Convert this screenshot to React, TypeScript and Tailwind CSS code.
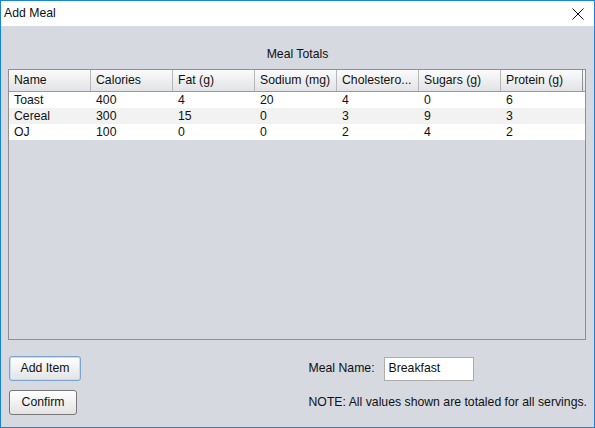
const COLUMNS = ['Name', 'Calories', 'Fat (g)', 'Sodium (mg)', 'Cholestero...', 'Sugars (g)', 'Protein (g)'];

const ROWS = [
  ['Toast', '400', '4', '20', '4', '0', '6'],
  ['Cereal', '300', '15', '0', '3', '9', '3'],
  ['OJ', '100', '0', '0', '2', '4', '2'],
];

function SwingButton({ label, focused, width }: { label: string; focused?: boolean; width: string }) {
  return (
    <button
      type="button"
      className={`${width} h-[25px] rounded-[3px] border text-[12.25px] text-[#111] bg-gradient-to-b from-white to-[#e3e3e3] ${
        focused ? 'border-[#7ba3cf] shadow-[inset_0_0_0_1px_#c5dcf3]' : 'border-[#777]'
      }`}
    >
      {label}
    </button>
  );
}

export default function App() {
  return (
    <div
      className="w-[595px] h-[428px] flex flex-col border border-[#1883d7] bg-[#d6d9df] text-[#111] text-[12.25px] overflow-hidden"
      style={{ fontFamily: '"Liberation Sans", Arial, sans-serif' }}
    >
      {/* Title bar */}
      <div className="h-[25px] shrink-0 bg-white flex items-center justify-between pl-[3px] pr-[10px]">
        <span className="leading-none">Add Meal</span>
        <svg width="12" height="12" viewBox="0 0 12 12" fill="none" stroke="#111" strokeWidth={1}>
          <path d="M0.5 0.5L11.5 11.5M11.5 0.5L0.5 11.5" />
        </svg>
      </div>

      {/* Body */}
      <div className="flex-1 flex flex-col px-[7px]">
        <div className="pt-[21px] h-[43px] text-center leading-[14px]">Meal Totals</div>

        {/* Table */}
        <div className="w-[578px] h-[271px] border border-[#8e8f91] flex flex-col">
          <div className="grid grid-cols-[repeat(7,82px)] h-[22px] border-b border-[#9a9a9a] bg-gradient-to-b from-[#fbfbfb] to-[#e2e3e6] shrink-0 pr-[2px]">
            {COLUMNS.map((c, i) => (
              <div
                key={c}
                className={`flex items-center pl-[5px] whitespace-nowrap ${
                  i < COLUMNS.length - 1 ? 'border-r border-[#b5b7bb]' : 'border-r border-[#8f9196]'
                }`}
              >
                {c}
              </div>
            ))}
          </div>
          {ROWS.map((r, ri) => (
            <div
              key={r[0]}
              className={`grid grid-cols-[repeat(7,82px)] h-[16px] ${ri % 2 === 1 ? 'bg-[#f2f2f2]' : 'bg-white'}`}
            >
              {r.map((v, ci) => (
                <div key={ci} className="pl-[5px] leading-[16px]">
                  {v}
                </div>
              ))}
            </div>
          ))}
        </div>

        {/* Bottom controls */}
        <div className="flex mt-[16px] pl-[1px]">
          <div className="w-[300px] flex flex-col gap-[9px]">
            <SwingButton label="Add Item" focused width="w-[72px]" />
            <SwingButton label="Confirm" width="w-[68px]" />
          </div>
          <div className="flex flex-col gap-[9px]">
            <div className="flex items-center h-[25px]">
              <span className="w-[75px]">Meal Name:</span>
              <div className="w-[90px] h-[24px] bg-white border border-[#adadad] flex items-center pl-[4px]">
                Breakfast
              </div>
            </div>
            <div className="h-[25px] flex items-center whitespace-nowrap">
              NOTE: All values shown are totaled for all servings.
            </div>
          </div>
        </div>
      </div>
    </div>
  );
}
